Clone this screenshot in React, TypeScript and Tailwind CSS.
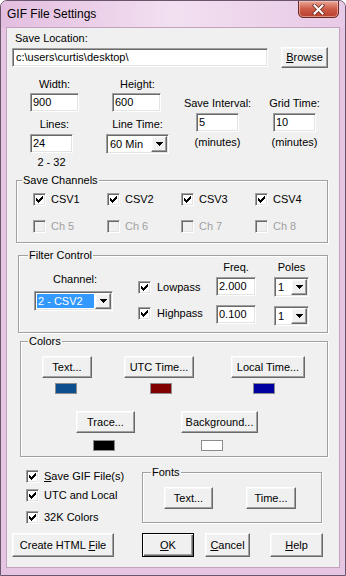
import React from "react";

const sunken =
  "border border-t-[#a0a0a0] border-l-[#a0a0a0] border-r-white border-b-white shadow-[inset_1px_1px_0_#696969,inset_-1px_-1px_0_#e3e3e3]";
const raised =
  "bg-[#f0f0f0] border border-t-white border-l-white border-r-[#696969] border-b-[#696969] shadow-[inset_-1px_-1px_0_#a0a0a0,inset_1px_1px_0_#f8f8f8]";

function Btn({ cls, children }: { cls: string; children: React.ReactNode }) {
  return <div className={`${raised} ${cls} flex items-center justify-center shrink-0`}>{children}</div>;
}

function Edit({ cls, value }: { cls: string; value: string }) {
  return <div className={`${sunken} ${cls} bg-white pl-[2px] flex items-center shrink-0`}>{value}</div>;
}

function Check({ checked, disabled }: { checked?: boolean; disabled?: boolean }) {
  return (
    <div
      className={`${sunken} ${disabled ? "bg-[#f0f0f0]" : "bg-white"} w-[13px] h-[13px] shrink-0 flex items-center justify-center`}
    >
      {checked && (
        <svg width="7" height="7" viewBox="0 0 7 7" shapeRendering="crispEdges">
          <path
            d="M6 0h1v1h-1z M5 1h2v1h-2z M0 2h1v1h-1z M4 2h3v1h-3z M0 3h2v1h-2z M3 3h3v1h-3z M0 4h5v1h-5z M1 5h3v1h-3z M2 6h1v1h-1z"
            fill="#000"
          />
        </svg>
      )}
    </div>
  );
}

function CheckRow({
  label,
  checked,
  disabled,
  gap,
}: {
  label: React.ReactNode;
  checked?: boolean;
  disabled?: boolean;
  gap: string;
}) {
  return (
    <div className={`flex items-center ${gap} h-[13px]`}>
      <Check checked={checked} disabled={disabled} />
      <span className={disabled ? "text-[#a0a0a0]" : "text-black"}>{label}</span>
    </div>
  );
}

function Arrow() {
  return (
    <svg width="7" height="4" viewBox="0 0 7 4" shapeRendering="crispEdges">
      <path d="M0 0h7v1h-7z M1 1h5v1h-5z M2 2h3v1h-3z M3 3h1v1h-1z" fill="#000" />
    </svg>
  );
}

function Combo({ cls, text, selected }: { cls: string; text: string; selected?: boolean }) {
  return (
    <div className={`${sunken} ${cls} bg-white flex p-[1px] shrink-0`}>
      <div className="flex-1 flex items-stretch">
        {selected ? (
          <div className="flex-1 m-[1px] bg-[#3399ff] text-white flex items-center pl-[1px]">{text}</div>
        ) : (
          <div className="flex-1 flex items-center pl-[2px]">{text}</div>
        )}
      </div>
      <div className={`${raised} w-[16px] flex items-center justify-center`}>
        <Arrow />
      </div>
    </div>
  );
}

function Group({
  label,
  labelLeft,
  cls,
  children,
}: {
  label: string;
  labelLeft: string;
  cls: string;
  children: React.ReactNode;
}) {
  return (
    <div className={`relative border border-[#a0a0a0] shadow-[1px_1px_0_#fff,inset_1px_1px_0_#fff] shrink-0 ${cls}`}>
      <span className={`absolute -top-[7px] ${labelLeft} px-[1px] bg-[#f0f0f0] leading-[13px]`}>{label}</span>
      {children}
    </div>
  );
}

function Swatch({ cls }: { cls: string }) {
  return <div className={`w-[22px] h-[11px] border border-[#8c8c8c] ${cls}`} />;
}

export default function App() {
  return (
    <div className="w-[346px] h-[576px] bg-[#e6c5e3] border border-[#6a566c] rounded-t-[7px] flex flex-col font-['Liberation_Sans',Arial,sans-serif] overflow-hidden">
      {/* title bar */}
      <div className="h-[27px] flex items-start justify-between bg-gradient-to-r from-[#e3bde0] via-[#f2e0f0] to-[#e8c9e6]">
        <div className="ml-[6px] mt-[6px] text-[12px] leading-[14px] text-black">GIF File Settings</div>
        <div className="mr-[6px] -mt-[1px] w-[41px] h-[18px] rounded-b-[5px] border border-[#6b2b24] bg-gradient-to-b from-[#e9a697] via-[#cc5a46] to-[#b8402c] flex items-center justify-center shadow-[inset_0_0_0_1px_rgba(255,220,210,0.5)]">
          <svg width="13" height="11" viewBox="0 0 13 11">
            <path d="M2.5 1.5 L10.5 9.5 M10.5 1.5 L2.5 9.5" stroke="#6a2f28" strokeWidth="3.6" strokeLinecap="square" />
            <path d="M2.5 1.5 L10.5 9.5 M10.5 1.5 L2.5 9.5" stroke="#fff" strokeWidth="2" strokeLinecap="square" />
          </svg>
        </div>
      </div>

      {/* client area */}
      <div className="ml-[6px] w-[332px] h-[539px] bg-[#f0f0f0] shadow-[0_0_0_1px_#c3a2c0] flex flex-col text-[11px] leading-[13px] text-black">
        <div className="ml-[8px] mt-[4px]">Save Location:</div>
        <div className="flex items-center mt-[2px] h-[21px]">
          <Edit cls="ml-[5px] w-[256px] h-[19px] pl-[3px]" value="c:\users\curtis\desktop\" />
          <Btn cls="ml-[13px] w-[47px] h-[21px]">
            <span>
              <u>B</u>rowse
            </span>
          </Btn>
        </div>

        {/* dimensions */}
        <div className="flex mt-[10px]">
          <div className="ml-[23px] w-[49px] flex flex-col">
            <div className="text-center">Width:</div>
            <Edit cls="mt-[2px] w-[49px] h-[19px]" value="900" />
            <div className="mt-[6px] text-center">Lines:</div>
            <Edit cls="mt-[3px] w-[43px] h-[19px]" value="24" />
            <div className="mt-[3px] w-[43px] text-center">2 - 32</div>
          </div>
          <div className="ml-[27px] w-[63px] flex flex-col">
            <div className="text-center">Height:</div>
            <Edit cls="mt-[2px] ml-[6px] w-[49px] h-[19px]" value="600" />
            <div className="mt-[6px] text-center">Line Time:</div>
            <Combo cls="mt-[3px] w-[63px] h-[20px]" text="60 Min" />
          </div>
          <div className="ml-[15px] w-[67px] pt-[19px] flex flex-col items-center">
            <div className="whitespace-nowrap">Save Interval:</div>
            <Edit cls="mt-[3px] w-[43px] h-[19px]" value="5" />
            <div className="mt-[4px]">(minutes)</div>
          </div>
          <div className="ml-[20px] w-[47px] pt-[19px] flex flex-col items-center">
            <div className="whitespace-nowrap">Grid Time:</div>
            <Edit cls="mt-[3px] w-[43px] h-[19px]" value="10" />
            <div className="mt-[4px]">(minutes)</div>
          </div>
        </div>

        {/* Save Channels */}
        <Group label="Save Channels" labelLeft="left-[5px]" cls="mt-[11px] ml-[9px] w-[312px] h-[63px]">
          <div className="grid grid-cols-[74px_74px_74px_74px] gap-y-[14px] pl-[16px] pt-[12px]">
            <CheckRow label="CSV1" checked gap="gap-[5px]" />
            <CheckRow label="CSV2" checked gap="gap-[5px]" />
            <CheckRow label="CSV3" checked gap="gap-[5px]" />
            <CheckRow label="CSV4" checked gap="gap-[5px]" />
            <CheckRow label="Ch 5" disabled gap="gap-[5px]" />
            <CheckRow label="Ch 6" disabled gap="gap-[5px]" />
            <CheckRow label="Ch 7" disabled gap="gap-[5px]" />
            <CheckRow label="Ch 8" disabled gap="gap-[5px]" />
          </div>
        </Group>

        {/* Filter Control */}
        <Group label="Filter Control" labelLeft="left-[9px]" cls="mt-[12px] ml-[11px] w-[310px] h-[78px]">
          <div className="flex pl-[15px]">
            <div className="w-[79px] flex flex-col">
              <div className="mt-[17px] text-center pl-[3px]">Channel:</div>
              <Combo cls="mt-[5px] w-[79px] h-[20px]" text="2 - CSV2" selected />
            </div>
            <div className="ml-[25px] w-[78px] flex flex-col">
              <div className="mt-[25px]">
                <CheckRow label="Lowpass" checked gap="gap-[6px]" />
              </div>
              <div className="mt-[13px]">
                <CheckRow label="Highpass" checked gap="gap-[6px]" />
              </div>
            </div>
            <div className="w-[40px] flex flex-col">
              <div className="mt-[5px] text-center">Freq.</div>
              <Edit cls="mt-[3px] w-[40px] h-[19px]" value="2.000" />
              <Edit cls="mt-[9px] w-[40px] h-[19px]" value="0.100" />
            </div>
            <div className="ml-[18px] w-[35px] flex flex-col">
              <div className="mt-[5px] text-center">Poles</div>
              <Combo cls="mt-[3px] w-[35px] h-[20px]" text="1" />
              <Combo cls="mt-[9px] w-[35px] h-[20px]" text="1" />
            </div>
          </div>
        </Group>

        {/* Colors */}
        <Group label="Colors" labelLeft="left-[7px]" cls="mt-[8px] ml-[13px] w-[308px] h-[116px]">
          <div className="flex mt-[14px]">
            <div className="ml-[21px] flex flex-col">
              <Btn cls="w-[50px] h-[22px]">Text...</Btn>
              <Swatch cls="mt-[5px] ml-[13px] bg-[#0d4e8e]" />
            </div>
            <div className="ml-[32px] flex flex-col">
              <Btn cls="w-[70px] h-[22px]">UTC Time...</Btn>
              <Swatch cls="mt-[5px] ml-[26px] bg-[#800000]" />
            </div>
            <div className="ml-[37px] flex flex-col">
              <Btn cls="w-[74px] h-[22px]">Local Time...</Btn>
              <Swatch cls="mt-[5px] ml-[22px] bg-[#0000a0]" />
            </div>
          </div>
          <div className="flex mt-[17px]">
            <div className="ml-[55px] flex flex-col">
              <Btn cls="w-[59px] h-[22px]">Trace...</Btn>
              <Swatch cls="mt-[7px] ml-[17px] bg-black" />
            </div>
            <div className="ml-[46px] flex flex-col">
              <Btn cls="w-[77px] h-[22px]">Background...</Btn>
              <Swatch cls="mt-[7px] ml-[20px] bg-white" />
            </div>
          </div>
        </Group>

        {/* options + fonts */}
        <div className="flex mt-[13px]">
          <div className="ml-[19px] w-[116px] flex flex-col">
            <CheckRow
              label={
                <span>
                  <u>S</u>ave GIF File(s)
                </span>
              }
              checked
              gap="gap-[5px]"
            />
            <div className="mt-[6px]">
              <CheckRow label="UTC and Local" checked gap="gap-[5px]" />
            </div>
            <div className="mt-[9px]">
              <CheckRow label="32K Colors" checked gap="gap-[5px]" />
            </div>
          </div>
          <Group label="Fonts" labelLeft="left-[8px]" cls="mt-[2px] w-[180px] h-[51px]">
            <div className="flex mt-[14px]">
              <Btn cls="ml-[21px] w-[49px] h-[22px]">Text...</Btn>
              <Btn cls="ml-[33px] w-[50px] h-[22px]">Time...</Btn>
            </div>
          </Group>
        </div>

        {/* bottom buttons */}
        <div className="flex mt-[9px]">
          <Btn cls="ml-[5px] w-[102px] h-[24px]">
            <span>
              Create HTML <u>F</u>ile
            </span>
          </Btn>
          <div className="ml-[28px] w-[52px] h-[24px] border border-black bg-[#f0f0f0] shadow-[inset_1px_1px_0_#fff,inset_-1px_-1px_0_#696969,inset_-2px_-2px_0_#a0a0a0] flex items-center justify-center shrink-0">
            <span>
              <u>O</u>K
            </span>
          </div>
          <Btn cls="ml-[11px] w-[45px] h-[24px]">
            <span>
              <u>C</u>ancel
            </span>
          </Btn>
          <Btn cls="ml-[20px] w-[53px] h-[24px]">
            <span>
              <u>H</u>elp
            </span>
          </Btn>
        </div>
      </div>
      <div className="flex-1" />
    </div>
  );
}
